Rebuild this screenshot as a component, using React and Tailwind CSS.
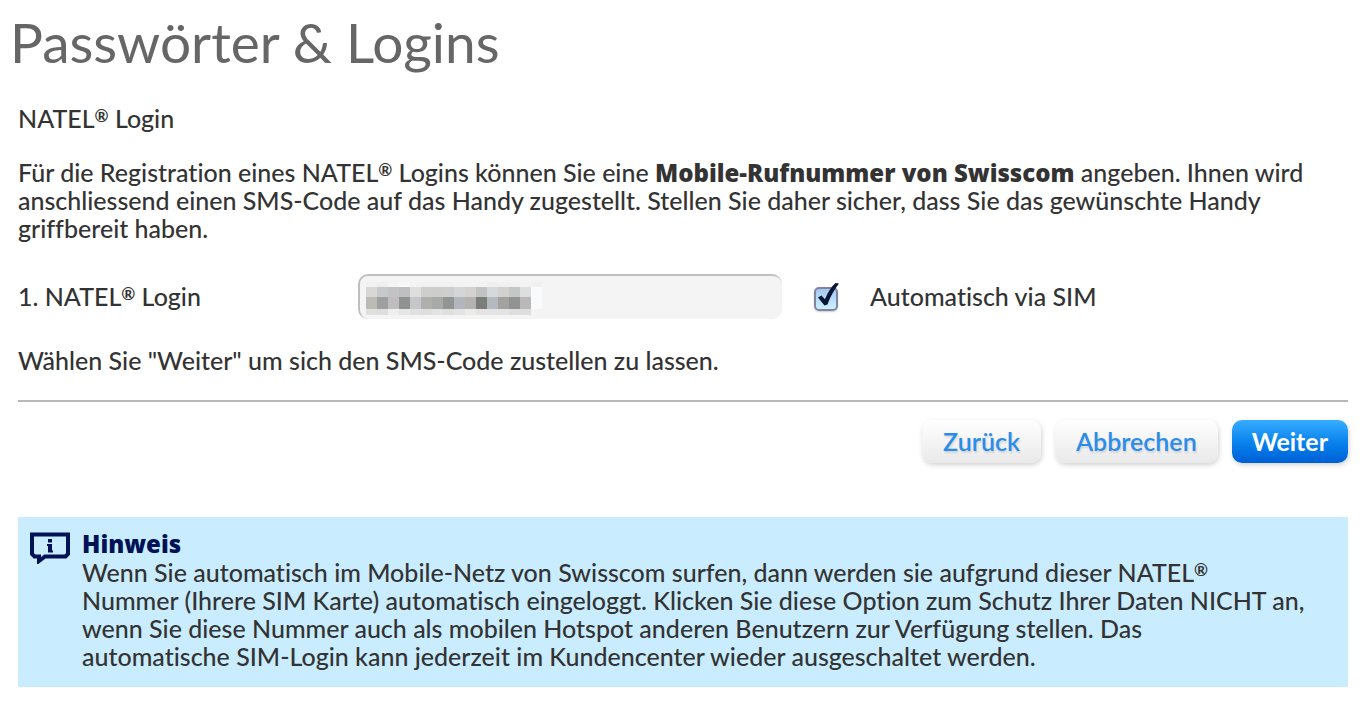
import React, { useState } from 'react';

// Rows of the mosaic that hides the phone number
const MASK_ROWS = [
    { y: 0, height: 5, colors: ['#f1f1f1', '#efefef', '#f4f4f4', '#f8f8f8', '#f3f3f3', '#f1f1f1', '#f1f1f1', '#f1f1f1', '#f3f3f3', '#f3f3f3', '#f3f3f3', '#efefef', '#f0f0f0', '#f1f1f1', '#f3f3f3', '#f0f0f0'] },
    { y: 5, height: 10, colors: ['#d9d7d5', '#c5c9ca', '#c4c3c4', '#bfbfc1', '#dedede', '#cecece', '#cdcdcb', '#cecece', '#d5d5d6', '#d4d2d1', '#c1c4c2', '#d6d9dc', '#d2d1cf', '#c3c7c5', '#dedede', '#f8fafc'] },
    { y: 15, height: 12, colors: ['#bbbab5', '#9d9fa1', '#bfbdbe', '#909191', '#c5c7ca', '#afafac', '#a7aaa8', '#929593', '#b1b7bc', '#b5b3b1', '#7b7d7b', '#b3babf', '#a3a29f', '#919291', '#b9b9bb', '#f8fafc'] },
    { y: 27, height: 6, colors: ['#e0e0e0', '#dedede', '#efefef', '#e6e6e6', '#e0e0e0', '#dedede', '#e3e3e3', '#dfdfdf', '#e3e3e3', '#ebebe9', '#e4e4e4', '#e4e4e4', '#e3e3e3', '#dedede', '#dedede', '#f4f4f4'] },
];

function NumberMask() {
    return (
        <svg className="absolute left-2 top-2 pointer-events-none" width="176" height="33" shapeRendering="crispEdges" aria-hidden="true">
            {MASK_ROWS.map(row => row.colors.map((color, i) => (
                <rect key={`${row.y}-${i}`} x={i * 11} y={row.y} width="11" height={row.height} fill={color} />
            )))}
        </svg>
    );
}

function Natel() {
    return <>NATEL<span className="text-[17px] leading-none font-bold align-[6px]">®</span></>;
}

function SimCheckbox({ checked, onChange }) {
    return (
        <span className="relative block w-6 h-7">
            <input
                id="auto-sim"
                type="checkbox"
                checked={checked}
                onChange={onChange}
                className="absolute left-0 bottom-0 w-6 h-6 appearance-none rounded-[5px] border-2 border-[#8084a0] bg-linear-to-b from-[#a3c8f0] to-[#cdf0ff] shadow-[0_1px_2px_rgba(0,0,0,0.2)]"
            />
            {checked && (
                <svg className="absolute left-0 top-0 pointer-events-none" width="26" height="28" viewBox="0 0 26 28" aria-hidden="true">
                    <path d="M4 14.500 7.500 12.500 11 16.200C13.500 10 17 4 21.500 0L25 0.500C20 7 16 14 13.500 21.500L10.500 22.500Z" fill="#061637" />
                </svg>
            )}
        </span>
    );
}

function InfoIcon() {
    return (
        <svg className="shrink-0 mt-0.5" width="40" height="32" viewBox="0 0 40 32" aria-hidden="true">
            <path d="M2 2.500H38V22L35.500 24.500H15L9 29V24.500H4.500L2 22Z" fill="none" stroke="#001155" strokeWidth="4" />
            <path d="M18 7H22V10.500H18ZM17 12H22V18.500H23V20.500H18V14H17Z" fill="#001155" />
        </svg>
    );
}

export default function App() {
    const [autoSim, setAutoSim] = useState(true);
    const [number, setNumber] = useState('');

    const plainButton = 'h-[43px] px-[21px] pb-0.5 rounded-[10px] bg-linear-to-b from-white to-[#e9e9e9] text-[#2a8ceb] font-semibold shadow-[1px_2px_5px_rgba(0,0,0,0.18)] [text-shadow:1px_2px_2px_rgba(0,0,0,0.12)]';

    return (
        <main className="min-h-screen bg-white text-[#333333] font-[Lato,'Noto_Sans',sans-serif] text-[25px] leading-7 font-medium [font-variant-ligatures:none] pt-2.5 pb-5 pl-[18px] pr-[14px]">
            <h1 className="-ml-2 text-[55px] leading-16 font-normal text-[#666666]">Passwörter &amp; Logins</h1>

            <h2 className="mt-[30px]"><Natel /> Login</h2>

            <p className="mt-[26px]">
                Für die Registration eines <Natel /> Logins können Sie eine <strong className="font-['Open_Sans',sans-serif] text-[24px] leading-none font-extrabold">Mobile-Rufnummer von Swisscom</strong> angeben. Ihnen wird anschliessend einen SMS-Code auf das Handy zugestellt. Stellen Sie daher sicher, dass Sie das gewünschte Handy griffbereit haben.
            </p>

            <form onSubmit={e => e.preventDefault()}>
                <div className="mt-8 flex items-center">
                    <label htmlFor="natel" className="w-[340px] pb-0.5">1. <Natel /> Login</label>
                    <div className="relative w-[424px]">
                        <input
                            id="natel"
                            type="tel"
                            value={number}
                            onChange={e => setNumber(e.target.value)}
                            className="block w-full h-[45px] px-2 rounded-[10px] bg-[#f4f4f4] border-t-2 border-l-2 border-[#bfbfbf] outline-none"
                        />
                        <NumberMask />
                    </div>
                    <div className="ml-8 flex items-center gap-8">
                        <SimCheckbox checked={autoSim} onChange={e => setAutoSim(e.target.checked)} />
                        <label htmlFor="auto-sim" className="pb-0.5">Automatisch via SIM</label>
                    </div>
                </div>

                <p className="mt-[27px]">Wählen Sie "Weiter" um sich den SMS-Code zustellen zu lassen.</p>

                <div className="mt-[26px] pt-[18px] border-t-2 border-[#b8b8b8] flex justify-end gap-[14px]">
                    <button type="button" className={plainButton}>Zurück</button>
                    <button type="button" className={plainButton}>Abbrechen</button>
                    <button type="submit" className="h-[43px] px-5 pb-0.5 rounded-[10px] bg-linear-to-b from-[#34adff] via-[#0a84ee] to-[#005fd6] text-white font-bold shadow-[1px_2px_5px_rgba(0,0,0,0.18)]">Weiter</button>
                </div>
            </form>

            <section className="mt-[54px] flex gap-3 bg-[#c9edff] pl-3 pr-4 pt-[13px] pb-[17px]">
                <InfoIcon />
                <div>
                    <h3 className="font-['Open_Sans',sans-serif] text-[24px] leading-7 font-extrabold text-[#001155]">Hinweis</h3>
                    <p>
                        Wenn Sie automatisch im Mobile-Netz von Swisscom surfen, dann werden sie aufgrund dieser <Natel /><br />
                        Nummer (Ihrere SIM Karte) automatisch eingeloggt. Klicken Sie diese Option zum Schutz Ihrer Daten NICHT an, wenn Sie diese Nummer auch als mobilen Hotspot anderen Benutzern zur Verfügung stellen. Das<br />
                        automatische SIM-Login kann jederzeit im Kundencenter wieder ausgeschaltet werden.
                    </p>
                </div>
            </section>
        </main>
    );
}
